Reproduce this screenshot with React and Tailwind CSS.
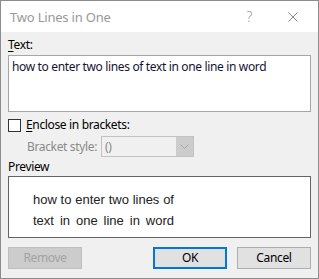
export default function App() {
  const ui = { fontFamily: '"Noto Sans", "Open Sans", sans-serif' };

  return (
    <div
      className="w-[319px] h-[279px] flex flex-col border border-[#8c8c8c] bg-[#f0f0f0] text-[12px] leading-[16px] tracking-[-0.35px] text-black"
      style={ui}
    >
      {/* title bar */}
      <div className="h-[31px] shrink-0 bg-white flex items-center pl-[9px] pr-[20px]">
        <span className="text-[13px] tracking-[-0.2px] text-[#999999]">Two Lines in One</span>
        <span className="ml-auto text-[14px] text-[#9a9a9a] font-light">?</span>
        <svg className="ml-[36px]" width="10" height="10" viewBox="0 0 10 10">
          <path d="M0.5 0.5 L9.5 9.5 M9.5 0.5 L0.5 9.5" stroke="#8a8a8a" strokeWidth="1" />
        </svg>
      </div>

      <div className="flex flex-col px-[7px]">
        <div className="mt-[5px]">
          <span className="underline underline-offset-2">T</span>ext:
        </div>
        <div className="mt-[2px] h-[57px] w-[303px] border border-[#a5a5a5] bg-white px-[3px] pt-[3px] text-[#141432]">
          how to enter two lines of text in one line in word
        </div>

        <div className="mt-[5px] flex items-center">
          <div className="w-[13px] h-[13px] border border-[#333333] bg-white" />
          <span className="ml-[5px]">
            <span className="underline underline-offset-2">E</span>nclose in brackets:
          </span>
        </div>

        <div className="mt-[3px] flex items-center">
          <span className="ml-[19px] w-[74px] shrink-0 whitespace-nowrap text-[#8a8a8a]">Bracket style:</span>
          <div className="flex h-[21px] w-[93px] border border-[#c2c2c2] bg-[#f0f0f0]">
            <span className="flex-1 pl-[3px] leading-[19px] text-[#8a8a8a]">()</span>
            <div className="w-[17px] bg-[#cccccc] flex items-center justify-center">
              <svg width="9" height="5" viewBox="0 0 9 5">
                <path d="M0.5 0.5 L4.5 4.5 L8.5 0.5" fill="none" stroke="#a8a8a8" strokeWidth="1" />
              </svg>
            </div>
          </div>
        </div>

        <div className="mt-[2px]">Preview</div>
        <div className="mt-[1px] h-[62px] w-[303px] border border-[#646464] bg-white pl-[24px] pt-[12px]">
          <div
            className="w-[141px] text-[13px] leading-[21px] tracking-normal text-[#222222] text-justify [text-align-last:justify]"
            style={{ fontFamily: '"Liberation Sans", Arial, sans-serif' }}
          >
            <div>how to enter two lines of</div>
            <div>text in one line in word</div>
          </div>
        </div>

        <div className="mt-[9px] flex">
          <button className="w-[74px] h-[22px] border border-[#bfbfbf] bg-[#cccccc] text-[#a3a3a3]">
            Remove
          </button>
          <button className="ml-auto w-[74px] h-[22px] border-2 border-[#0078d7] bg-[#e1e1e1]">
            OK
          </button>
          <button className="ml-[10px] w-[74px] h-[22px] border border-[#adadad] bg-[#e1e1e1]">
            Cancel
          </button>
        </div>
      </div>
    </div>
  );
}
